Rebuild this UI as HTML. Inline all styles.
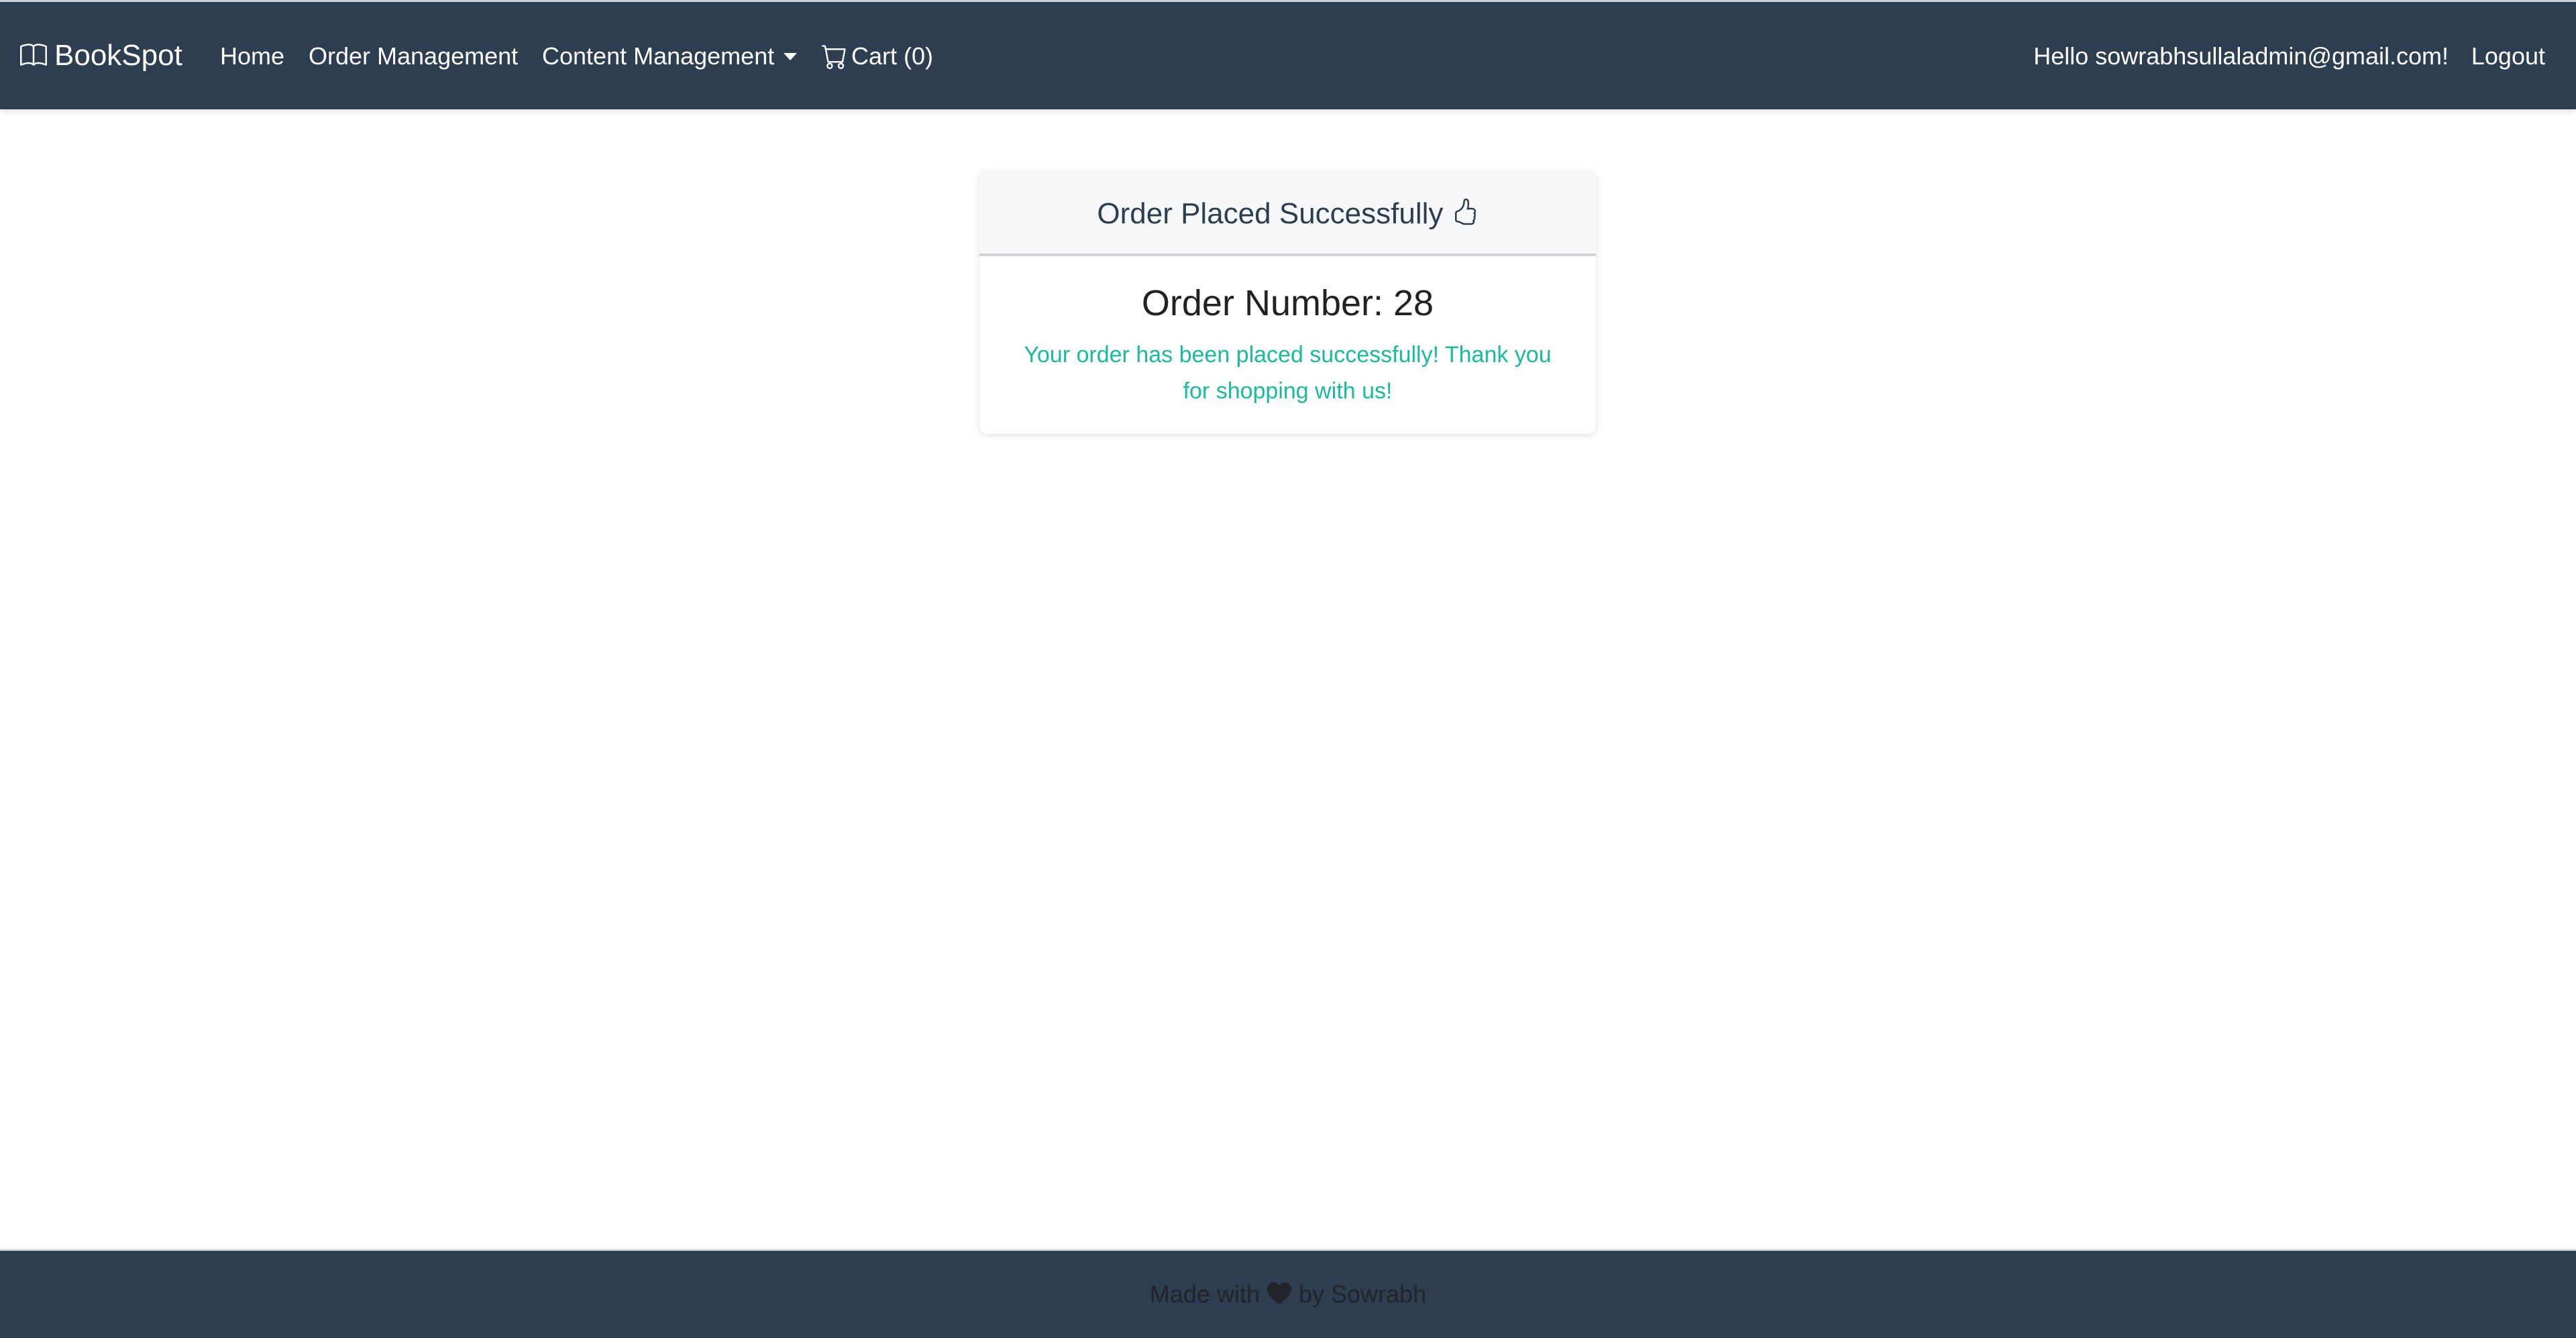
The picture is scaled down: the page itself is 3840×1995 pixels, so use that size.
<!DOCTYPE html>
<html><head><meta charset="utf-8"><style>
*{margin:0;padding:0;box-sizing:border-box}
body{width:3840px;height:1995px;background:#fff;font-family:"Liberation Sans",sans-serif;position:relative;overflow:hidden;color:#212529}
.nav{position:absolute;left:0;top:0;width:3840px;height:163px;background:#2c3e50;border-top:3px solid #c9cdd8;box-shadow:0 3px 8px rgba(0,0,0,.12)}
.nav span,.nav svg{position:absolute}
.nt{color:#fff;font-size:36px;top:59px;line-height:44px;white-space:nowrap}
.card{position:absolute;left:1460px;top:255px;width:919px;height:392px;border-radius:12px;box-shadow:0 2px 10px rgba(0,0,0,.12);background:#fff;overflow:hidden}
.ch{height:127px;background:#f7f8fa;border-bottom:4px solid #cfd1d5;text-align:center;font-size:44px;line-height:127px;color:#2c3e50}
.on{text-align:center;font-size:54px;margin-top:38px;line-height:64px;color:#222}
.msg{color:#18bc9c;font-size:34px;line-height:54px;text-align:center;width:800px;margin:18px auto 0}
.foot{position:absolute;left:0;top:1862px;width:3840px;height:133px;background:#2c3e50;border-top:3px solid #d5d8de;text-align:center;font-size:36px;line-height:130px;color:#212529}
</style></head><body>
<div class="nav">
<svg style="left:27px;top:60px" width="46" height="40" viewBox="0 0 16 16" fill="#fff"><path d="M1 2.828c.885-.37 2.154-.769 3.388-.893 1.33-.134 2.458.063 3.112.752v9.746c-.935-.53-2.12-.603-3.213-.493-1.18.12-2.37.461-3.287.811V2.828zm7.5-.141c.654-.689 1.782-.886 3.112-.752 1.234.124 2.503.523 3.388.893v9.923c-.918-.35-2.107-.692-3.287-.81-1.094-.111-2.278-.039-3.213.492V2.687zM8 1.783C7.015.936 5.587.81 4.287.94c-1.514.153-3.042.672-3.994 1.105A.5.5 0 0 0 0 2.5v11a.5.5 0 0 0 .707.455c.882-.4 2.303-.881 3.68-1.020 1.409-.142 2.59.087 3.223.877a.5.5 0 0 0 .78 0c.633-.79 1.814-1.019 3.222-.877 1.378.139 2.8.62 3.681 1.020A.5.5 0 0 0 16 13.5v-11a.5.5 0 0 0-.293-.455c-.952-.433-2.48-.952-3.994-1.105C10.413.809 8.985.936 8 1.783z"/></svg>
<span class="nt" style="left:81px;top:53px;font-size:44px;line-height:54px">BookSpot</span>
<span class="nt" style="left:328px">Home</span>
<span class="nt" style="left:460px">Order Management</span>
<span class="nt" style="left:808px">Content Management</span>
<svg style="left:1168px;top:76px" width="20" height="12" viewBox="0 0 20 12"><path d="M0 0h20L10 11z" fill="#fff"/></svg>
<svg style="left:1225px;top:62px" width="38" height="38" viewBox="0 0 16 16" fill="#fff"><path d="M0 1.5A.5.5 0 0 1 .5 1H2a.5.5 0 0 1 .485.379L2.89 3H14.5a.5.5 0 0 1 .491.592l-1.5 8A.5.5 0 0 1 13 12H4a.5.5 0 0 1-.491-.408L2.01 3.607 1.61 2H.5a.5.5 0 0 1-.5-.5zM3.102 4l1.313 7h8.17l1.313-7H3.102zM5 12a2 2 0 1 0 0 4 2 2 0 0 0 0-4zm7 0a2 2 0 1 0 0 4 2 2 0 0 0 0-4zm-7 1a1 1 0 1 1 0 2 1 1 0 0 1 0-2zm7 0a1 1 0 1 1 0 2 1 1 0 0 1 0-2z"/></svg>
<span class="nt" style="left:1269px">Cart (0)</span>
<span class="nt" style="right:190px">Hello sowrabhsullaladmin@gmail.com!</span>
<span class="nt" style="right:46px">Logout</span>
</div>
<div class="card">
<div class="ch">Order Placed Successfully <svg width="40" height="46" viewBox="0 0 16 16" fill="#2c3e50" style="vertical-align:-6px"><path d="M8.864.046C7.908-.193 7.02.53 6.956 1.466c-.072 1.051-.23 2.016-.428 2.59-.125.36-.479 1.013-1.04 1.639-.557.623-1.282 1.178-2.131 1.41C2.685 7.288 2 7.870 2 8.72v4.001c0 .845.682 1.464 1.448 1.545 1.07.114 1.564.415 2.068.723l.048.03c.272.165.578.348.97.484.397.136.861.217 1.466.217h3.5c.937 0 1.599-.477 1.934-1.064a1.86 1.86 0 0 0 .254-.912c0-.152-.023-.312-.077-.464.201-.263.38-.578.488-.901.11-.33.172-.762.004-1.149.069-.13.12-.269.159-.403.077-.27.113-.568.113-.857 0-.288-.036-.585-.113-.856a2.144 2.144 0 0 0-.138-.362 1.9 1.9 0 0 0 .234-1.734c-.206-.592-.682-1.1-1.2-1.272-.847-.282-1.803-.276-2.516-.211a9.840 9.840 0 0 0-.443.05 9.365 9.365 0 0 0-.062-4.509A1.38 1.38 0 0 0 9.125.111L8.864.046zM11.5 14.721H8c-.51 0-.863-.069-1.140-.164-.281-.097-.506-.228-.776-.393l-.04-.024c-.555-.339-1.198-.731-2.490-.868-.333-.036-.554-.29-.554-.55V8.72c0-.254.226-.543.62-.65 1.095-.3 1.977-.996 2.614-1.708.635-.71 1.064-1.475 1.238-1.978.243-.7.407-1.768.482-2.850.025-.362.36-.594.667-.518l.262.066c.16.04.258.143.288.255a8.340 8.340 0 0 1-.145 4.725.5.5 0 0 0 .595.644l.003-.001.014-.003.058-.014a8.908 8.908 0 0 1 1.036-.157c.663-.06 1.457-.054 2.110.164.175.058.45.3.57.65.107.308.087.67-.266 1.022l-.353.353.353.354c.043.043.105.141.154.315.048.167.075.37.075.581 0 .212-.027.414-.075.582-.05.174-.111.272-.154.315l-.353.353.353.354c.047.047.109.177.005.488a2.224 2.224 0 0 1-.505.805l-.353.353.353.354c.006.005.041.05.041.17a.866.866 0 0 1-.121.416c-.165.288-.503.56-1.066.56z"/></svg></div>
<div class="on">Order Number: 28</div>
<div class="msg">Your order has been placed successfully! Thank you for shopping with us!</div>
</div>
<div class="foot">Made with <svg width="38" height="34" viewBox="0 0 16 15" style="vertical-align:-4px"><path d="M8 14.5C3 10.5 0 8 0 4.5 0 2 2 0 4.3 0 6 0 7.3 1 8 2.3 8.7 1 10 0 11.7 0 14 0 16 2 16 4.5 16 8 13 10.5 8 14.5z" fill="#212529"/></svg> by Sowrabh</div>
</body></html>
